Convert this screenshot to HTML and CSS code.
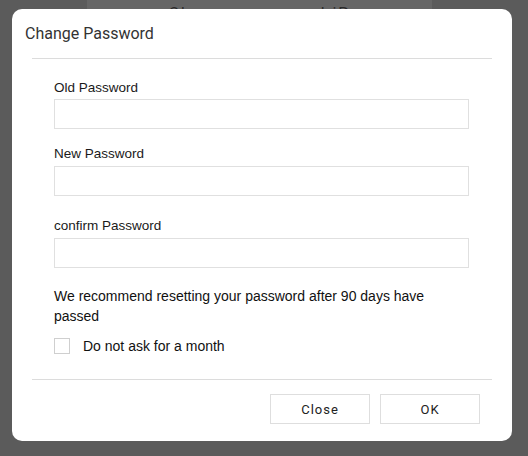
FILE: index.html
```html
<!DOCTYPE html>
<html>
<head>
<meta charset="utf-8">
<link rel="stylesheet" href="styles.css">
</head>
<body>
<div class="backdrop">
  <div class="under-panel"><div class="under-title">Change password iP</div></div>
</div>
<div class="dialog">
  <div class="dlg-header">Change Password</div>
  <div class="rule"></div>
  <div class="dlg-body">
    <label class="lbl lbl-first">Old Password</label>
    <div class="field"></div>
    <label class="lbl">New Password</label>
    <div class="field"></div>
    <label class="lbl lbl-third">confirm Password</label>
    <div class="field"></div>
    <p class="note">We recommend resetting your password after 90 days have passed</p>
    <div class="check-row">
      <span class="checkbox"></span>
      <span class="check-text">Do not ask for a month</span>
    </div>
  </div>
  <div class="rule"></div>
  <div class="dlg-footer">
    <button class="btn">Close</button>
    <button class="btn">OK</button>
  </div>
</div>
</body>
</html>
```
FILE: styles.css
```css
html, body {
  margin: 0;
  padding: 0;
}
body {
  width: 528px;
  height: 456px;
  background: #5b5b5b;
  font-family: "Liberation Sans", Arial, sans-serif;
  position: relative;
  overflow: hidden;
  padding-top: 9px;
  box-sizing: border-box;
}
.backdrop {
  position: absolute;
  left: 0;
  top: 0;
  width: 528px;
  height: 456px;
}
.under-panel {
  position: absolute;
  left: 87px;
  top: 0;
  width: 345px;
  height: 120px;
  background: #666;
}
.under-title {
  margin-top: 4px;
  text-align: center;
  font-family: Roboto, sans-serif;
  font-size: 16px;
  line-height: 20px;
  color: #2a2a2a;
  letter-spacing: 2px;
}
.dialog {
  position: relative;
  margin-left: 12px;
  width: 500px;
  height: 432px;
  background: #fff;
  border-radius: 10px;
  display: flex;
  flex-direction: column;
}
.dlg-header {
  height: 49px;
  display: flex;
  align-items: center;
  padding-left: 13px;
  font-family: Roboto, sans-serif;
  font-size: 16px;
  color: #333;
}
.rule {
  height: 1px;
  background: #dcdcdc;
  margin: 0 20px;
}
.dlg-body {
  padding: 0 43px 0 42px;
  display: flex;
  flex-direction: column;
  height: 320px;
}
.lbl {
  display: block;
  font-size: 13.5px;
  line-height: 16px;
  color: #1a1a1a;
  margin-top: 17px;
  margin-bottom: 4px;
}
.lbl-first {
  margin-top: 21px;
  margin-bottom: 3px;
}
.lbl-third {
  margin-top: 22px;
}
.field {
  height: 30px;
  box-sizing: border-box;
  border: 1px solid #e0e0e0;
}
.note {
  margin: 18px 0 0;
  font-size: 14px;
  line-height: 20px;
  color: #111;
  padding-right: 40px;
}
.check-row {
  display: flex;
  align-items: center;
  margin-top: 12px;
}
.checkbox {
  width: 16px;
  height: 16px;
  box-sizing: border-box;
  border: 1px solid #cfcfcf;
  margin-right: 13px;
}
.check-text {
  font-size: 14px;
  color: #111;
}
.dlg-footer {
  display: flex;
  justify-content: flex-end;
  gap: 10px;
  padding: 14px 32px 0 0;
}
.btn {
  width: 100px;
  height: 30px;
  background: #fff;
  border: 1px solid #dedede;
  font-family: Roboto, sans-serif;
  font-size: 13px;
  letter-spacing: 1px;
  color: #222;
  padding: 0;
}
```
